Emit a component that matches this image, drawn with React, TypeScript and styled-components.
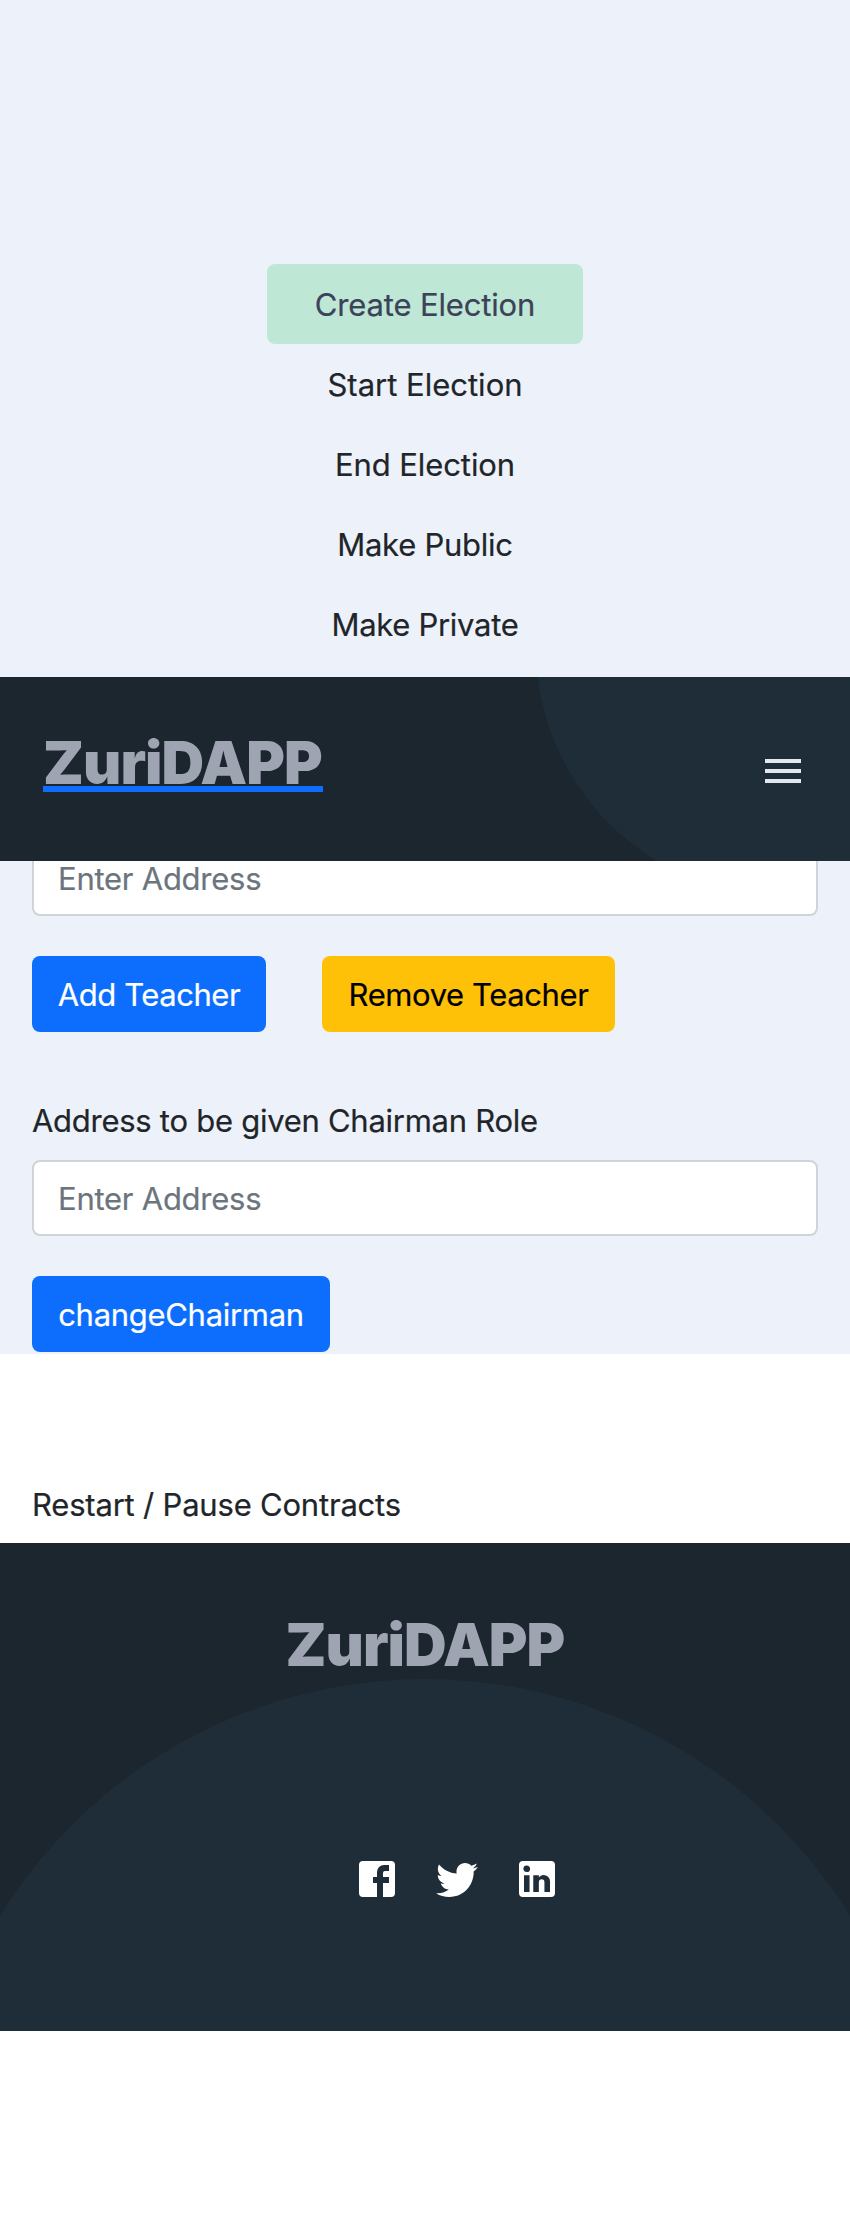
import React from "react";
import styled, { createGlobalStyle } from "styled-components";

const GlobalStyle = createGlobalStyle`
  *, *::before, *::after { box-sizing: border-box; }
  body {
    margin: 0;
    background: #ffffff;
    color: #212529;
    font-family: Inter, "Liberation Sans", sans-serif;
    font-size: 31px;
    line-height: 48px;
    -webkit-text-stroke: 0.2px;
  }
`;

const Page = styled.div`
  display: flex;
  flex-direction: column;
  min-height: 2220px;
`;

const Dashboard = styled.main`
  display: flex;
  flex-direction: column;
  height: 1354px;
  padding-top: 264px;
  background: #edf2fa;
`;

const Tabs = styled.nav`
  display: flex;
  flex-direction: column;
  align-items: center;
  height: 413px;
  flex-shrink: 0;
`;

const Tab = styled.button<{ $active?: boolean; $spacing: number }>`
  width: 316px;
  height: 80px;
  padding: 2px 0 0;
  border: 0;
  border-radius: 8px;
  background: ${(p) => (p.$active ? "#bee8d5" : "transparent")};
  color: ${(p) => (p.$active ? "#3c4257" : "#212529")};
  font: inherit;
  letter-spacing: ${(p) => p.$spacing}px;
  white-space: nowrap;
`;

const Header = styled.header`
  position: relative;
  z-index: 1;
  display: flex;
  flex-shrink: 0;
  justify-content: space-between;
  height: 184px;
  padding: 48px 43px 0;
  overflow: hidden;
  background: #1c262f;
`;

const Brand = styled.span`
  position: relative;
  height: 66px;
  color: #9ea4b1;
  font-size: 59px;
  font-weight: 900;
  line-height: 75px;
  letter-spacing: -0.95px;
  white-space: nowrap;
  -webkit-text-stroke: 0;
`;

const BrandLink = styled(Brand)`
  width: 280px;
  border-bottom: 6px solid #0d6efd;
  height: 67px;
`;

const Circle = styled.div<{ $size: number; $x: number; $y: number }>`
  position: absolute;
  left: ${(p) => p.$x}px;
  top: ${(p) => p.$y}px;
  width: ${(p) => p.$size}px;
  height: ${(p) => p.$size}px;
  border-radius: 50%;
  background: #1f2d38;
`;

const MenuButton = styled.button`
  position: relative;
  width: 48px;
  height: 48px;
  margin: 22px 0 0;
  padding: 0;
  border: 0;
  background: none;
  color: #e2e8f0;
`;

const Form = styled.section`
  display: flex;
  flex-direction: column;
  align-items: flex-start;
  padding: 0 32px;
  margin-top: -21px;
`;

const Field = styled.input`
  width: 100%;
  height: 76px;
  flex-shrink: 0;
  padding: 1px 24px 0;
  border: 2px solid #ced4da;
  border-radius: 8px;
  background: #ffffff;
  font: inherit;
  letter-spacing: -0.25px;
  &::placeholder {
    color: #6c757d;
    opacity: 1;
  }
`;

const Label = styled.label<{ $spacing: number }>`
  letter-spacing: ${(p) => p.$spacing}px;
  white-space: nowrap;
`;

const FieldLabel = styled(Label)`
  margin: 65px 0 15px;
`;

const Actions = styled.div`
  display: flex;
  gap: 56px;
  margin-top: 40px;
`;

const Button = styled.button<{ $warning?: boolean; $width: number; $spacing: number }>`
  width: ${(p) => p.$width}px;
  height: 76px;
  padding: 1px 0 0;
  border: 0;
  border-radius: 8px;
  background: ${(p) => (p.$warning ? "#ffc107" : "#0d6efd")};
  color: ${(p) => (p.$warning ? "#000000" : "#ffffff")};
  font: inherit;
  letter-spacing: ${(p) => p.$spacing}px;
  white-space: nowrap;
`;

const Contracts = styled.section`
  height: 189px;
  padding: 127px 32px 0;
`;

const Footer = styled.footer`
  position: relative;
  display: flex;
  flex-direction: column;
  align-items: center;
  height: 488px;
  padding-top: 64px;
  overflow: hidden;
  background: #1c262f;
`;

const Social = styled.div`
  position: relative;
  display: flex;
  gap: 32px;
  margin: 182px 0 0 64px;
  color: #ffffff;
`;

const Glyph = styled.svg`
  display: block;
  width: 48px;
  height: 48px;
  fill: currentColor;
`;

const Icon = ({ d }: { d: string }) => (
  <Glyph viewBox="0 0 24 24" aria-hidden="true">
    <path d={d} fillRule="evenodd" />
  </Glyph>
);

const icons = {
  menu: "M3 6h18v2H3zM3 11h18v2H3zM3 16h18v2H3z",
  facebook:
    "M5 3H19A2 2 0 0 1 21 5V19A2 2 0 0 1 19 21H5A2 2 0 0 1 3 19V5A2 2 0 0 1 5 3M18 5H15.5A3.5 3.5 0 0 0 12 8.5V11H10V14H12V21H15V14H18V11H15V9A1 1 0 0 1 16 8H18V5Z",
  twitter:
    "M22.46 6C21.69 6.35 20.86 6.58 20 6.69C20.88 6.16 21.56 5.32 21.88 4.31C21.05 4.81 20.13 5.16 19.16 5.36C18.37 4.5 17.26 4 16 4C13.65 4 11.73 5.92 11.73 8.29C11.73 8.63 11.77 8.96 11.84 9.27C8.28 9.09 5.11 7.38 3 4.79C2.63 5.42 2.42 6.16 2.42 6.94C2.42 8.43 3.17 9.75 4.33 10.5C3.62 10.5 2.96 10.3 2.38 10V10.03C2.38 12.11 3.86 13.85 5.82 14.24C5.46 14.34 5.08 14.39 4.69 14.39C4.42 14.39 4.15 14.36 3.89 14.31C4.43 16 6 17.26 7.89 17.29C6.43 18.45 4.58 19.13 2.56 19.13C2.22 19.13 1.88 19.11 1.54 19.07C3.44 20.29 5.7 21 8.12 21C16 21 20.33 14.46 20.33 8.79C20.33 8.6 20.33 8.42 20.32 8.23C21.16 7.63 21.88 6.87 22.46 6Z",
  linkedin:
    "M19 3A2 2 0 0 1 21 5V19A2 2 0 0 1 19 21H5A2 2 0 0 1 3 19V5A2 2 0 0 1 5 3H19M18.5 18.5V13.2A3.26 3.26 0 0 0 15.24 9.94C14.39 9.94 13.4 10.46 12.92 11.24V10.13H10.13V18.5H12.92V13.57C12.92 12.8 13.54 12.17 14.31 12.17A1.4 1.4 0 0 1 15.71 13.57V18.5H18.5M6.88 8.56A1.68 1.68 0 0 0 8.56 6.88C8.56 5.95 7.81 5.19 6.88 5.19A1.69 1.69 0 0 0 5.19 6.88C5.19 7.81 5.95 8.56 6.88 8.56M8.27 18.5V10.13H5.5V18.5H8.27Z",
};

const tabs = [
  { name: "Create Election", spacing: -0.15 },
  { name: "Start Election", spacing: 0 },
  { name: "End Election", spacing: -0.08 },
  { name: "Make Public", spacing: -0.25 },
  { name: "Make Private", spacing: -0.3 },
];

export default function App() {
  return (
    <Page>
      <GlobalStyle />
      <Dashboard>
        <Tabs>
          {tabs.map((tab, i) => (
            <Tab key={tab.name} $active={i === 0} $spacing={tab.spacing}>
              {tab.name}
            </Tab>
          ))}
        </Tabs>
        <Header>
          <Circle $size={500} $x={536} $y={-280} />
          <BrandLink>ZuriDAPP</BrandLink>
          <MenuButton aria-label="Menu">
            <Icon d={icons.menu} />
          </MenuButton>
        </Header>
        <Form>
          <Field placeholder="Enter Address" />
          <Actions>
            <Button $width={234} $spacing={-0.45}>Add Teacher</Button>
            <Button $warning $width={293} $spacing={-0.4}>Remove Teacher</Button>
          </Actions>
          <FieldLabel htmlFor="chairman" $spacing={-0.27}>
            Address to be given Chairman Role
          </FieldLabel>
          <Field id="chairman" placeholder="Enter Address" />
          <Actions>
            <Button $width={298} $spacing={-0.3}>changeChairman</Button>
          </Actions>
        </Form>
      </Dashboard>
      <Contracts>
        <Label $spacing={-0.2}>Restart / Pause Contracts</Label>
      </Contracts>
      <Footer>
        <Circle $size={1000} $x={-75} $y={136} />
        <Brand>ZuriDAPP</Brand>
        <Social>
          <Icon d={icons.facebook} />
          <Icon d={icons.twitter} />
          <Icon d={icons.linkedin} />
        </Social>
      </Footer>
    </Page>
  );
}
